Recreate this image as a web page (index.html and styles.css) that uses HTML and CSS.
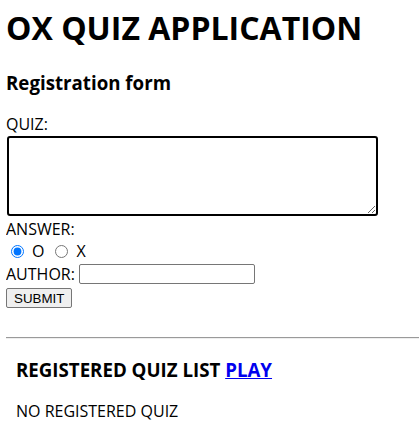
FILE: index.html
```html
<!DOCTYPE html>
<html lang="ko">
    <head>
        <meta charset="UTF-8">
        <meta name="viewport" content="width=device-width, initial-scale=1.0">
        <title>OX QUIZ APPLICATION</title>
        <link rel="stylesheet" href="styles.css">
    </head>
    <body>
        <h1>OX QUIZ APPLICATION</h1>

        <form class="register">
            <h3>Registration form</h3>
            <label for="quiz">QUIZ:</label>
            <textarea id="quiz" class="quiz"></textarea>
            <div class="label">ANSWER:</div>
            <div class="answers">
                <input type="radio" name="answer" id="ans-o" checked>
                <label for="ans-o">O</label>
                <input type="radio" name="answer" id="ans-x">
                <label for="ans-x">X</label>
            </div>
            <div class="author">
                <label for="author">AUTHOR:</label>
                <input type="text" id="author">
            </div>
            <button type="button">SUBMIT</button>
        </form>

        <hr>

        <div class="list">
            <h3>REGISTERED QUIZ LIST <a href="#">PLAY</a></h3>
            <p>NO REGISTERED QUIZ</p>
        </div>
    </body>
</html>
```

FILE: styles.css
```css
* {
    font-family: "Open Sans", "Noto Sans CJK KR", sans-serif;
}

body {
    margin: 8px 0 0 6px;
    font-size: 16px;
    line-height: 21px;
    overflow: hidden;
}

h1 {
    font-size: 32px;
    line-height: 39px;
    margin: 0;
}

h3 {
    font-size: 18.7px;
    line-height: 25px;
    margin: 23px 0 19px;
}

.register {
    display: flex;
    flex-direction: column;
    align-items: flex-start;
}

.quiz {
    width: 363px;
    height: 72px;
    border: 2px solid black;
    border-radius: 3px;
    margin: 1px 0 0 1px;
    padding: 2px;
    resize: vertical;
}

.label {
    margin-top: 3px;
}

.answers {
    display: flex;
    align-items: center;
    height: 22px;
}
.answers input {
    width: 13px;
    height: 13px;
    margin: 0 4px 0 5px;
}
.answers label {
    margin: 0 6px 0 4px;
}

.author {
    display: flex;
    align-items: center;
    gap: 4px;
    height: 24px;
}
.author input {
    box-sizing: border-box;
    width: 176px;
    height: 20px;
    padding: 0 2px;
    border: 1px solid #767676;
    border-radius: 2px;
}

button {
    font-family: "Liberation Sans", Arial, sans-serif;
    font-size: 13.33px;
    height: 20px;
    padding: 0 7px;
    margin-top: 2px;
    border: 1px solid #767676;
    border-radius: 2px;
    background: #efefef;
    color: black;
}

hr {
    margin: 29px -10px 0 0;
    border: none;
    border-top: 1px solid #9a9a9a;
    border-bottom: 1px solid #eee;
}

.list {
    padding: 0 10px;
}
.list h3 {
    margin: 18px 0 19px;
}
.list a {
    color: #0000ee;
}
.list p {
    margin: 0;
}
```
